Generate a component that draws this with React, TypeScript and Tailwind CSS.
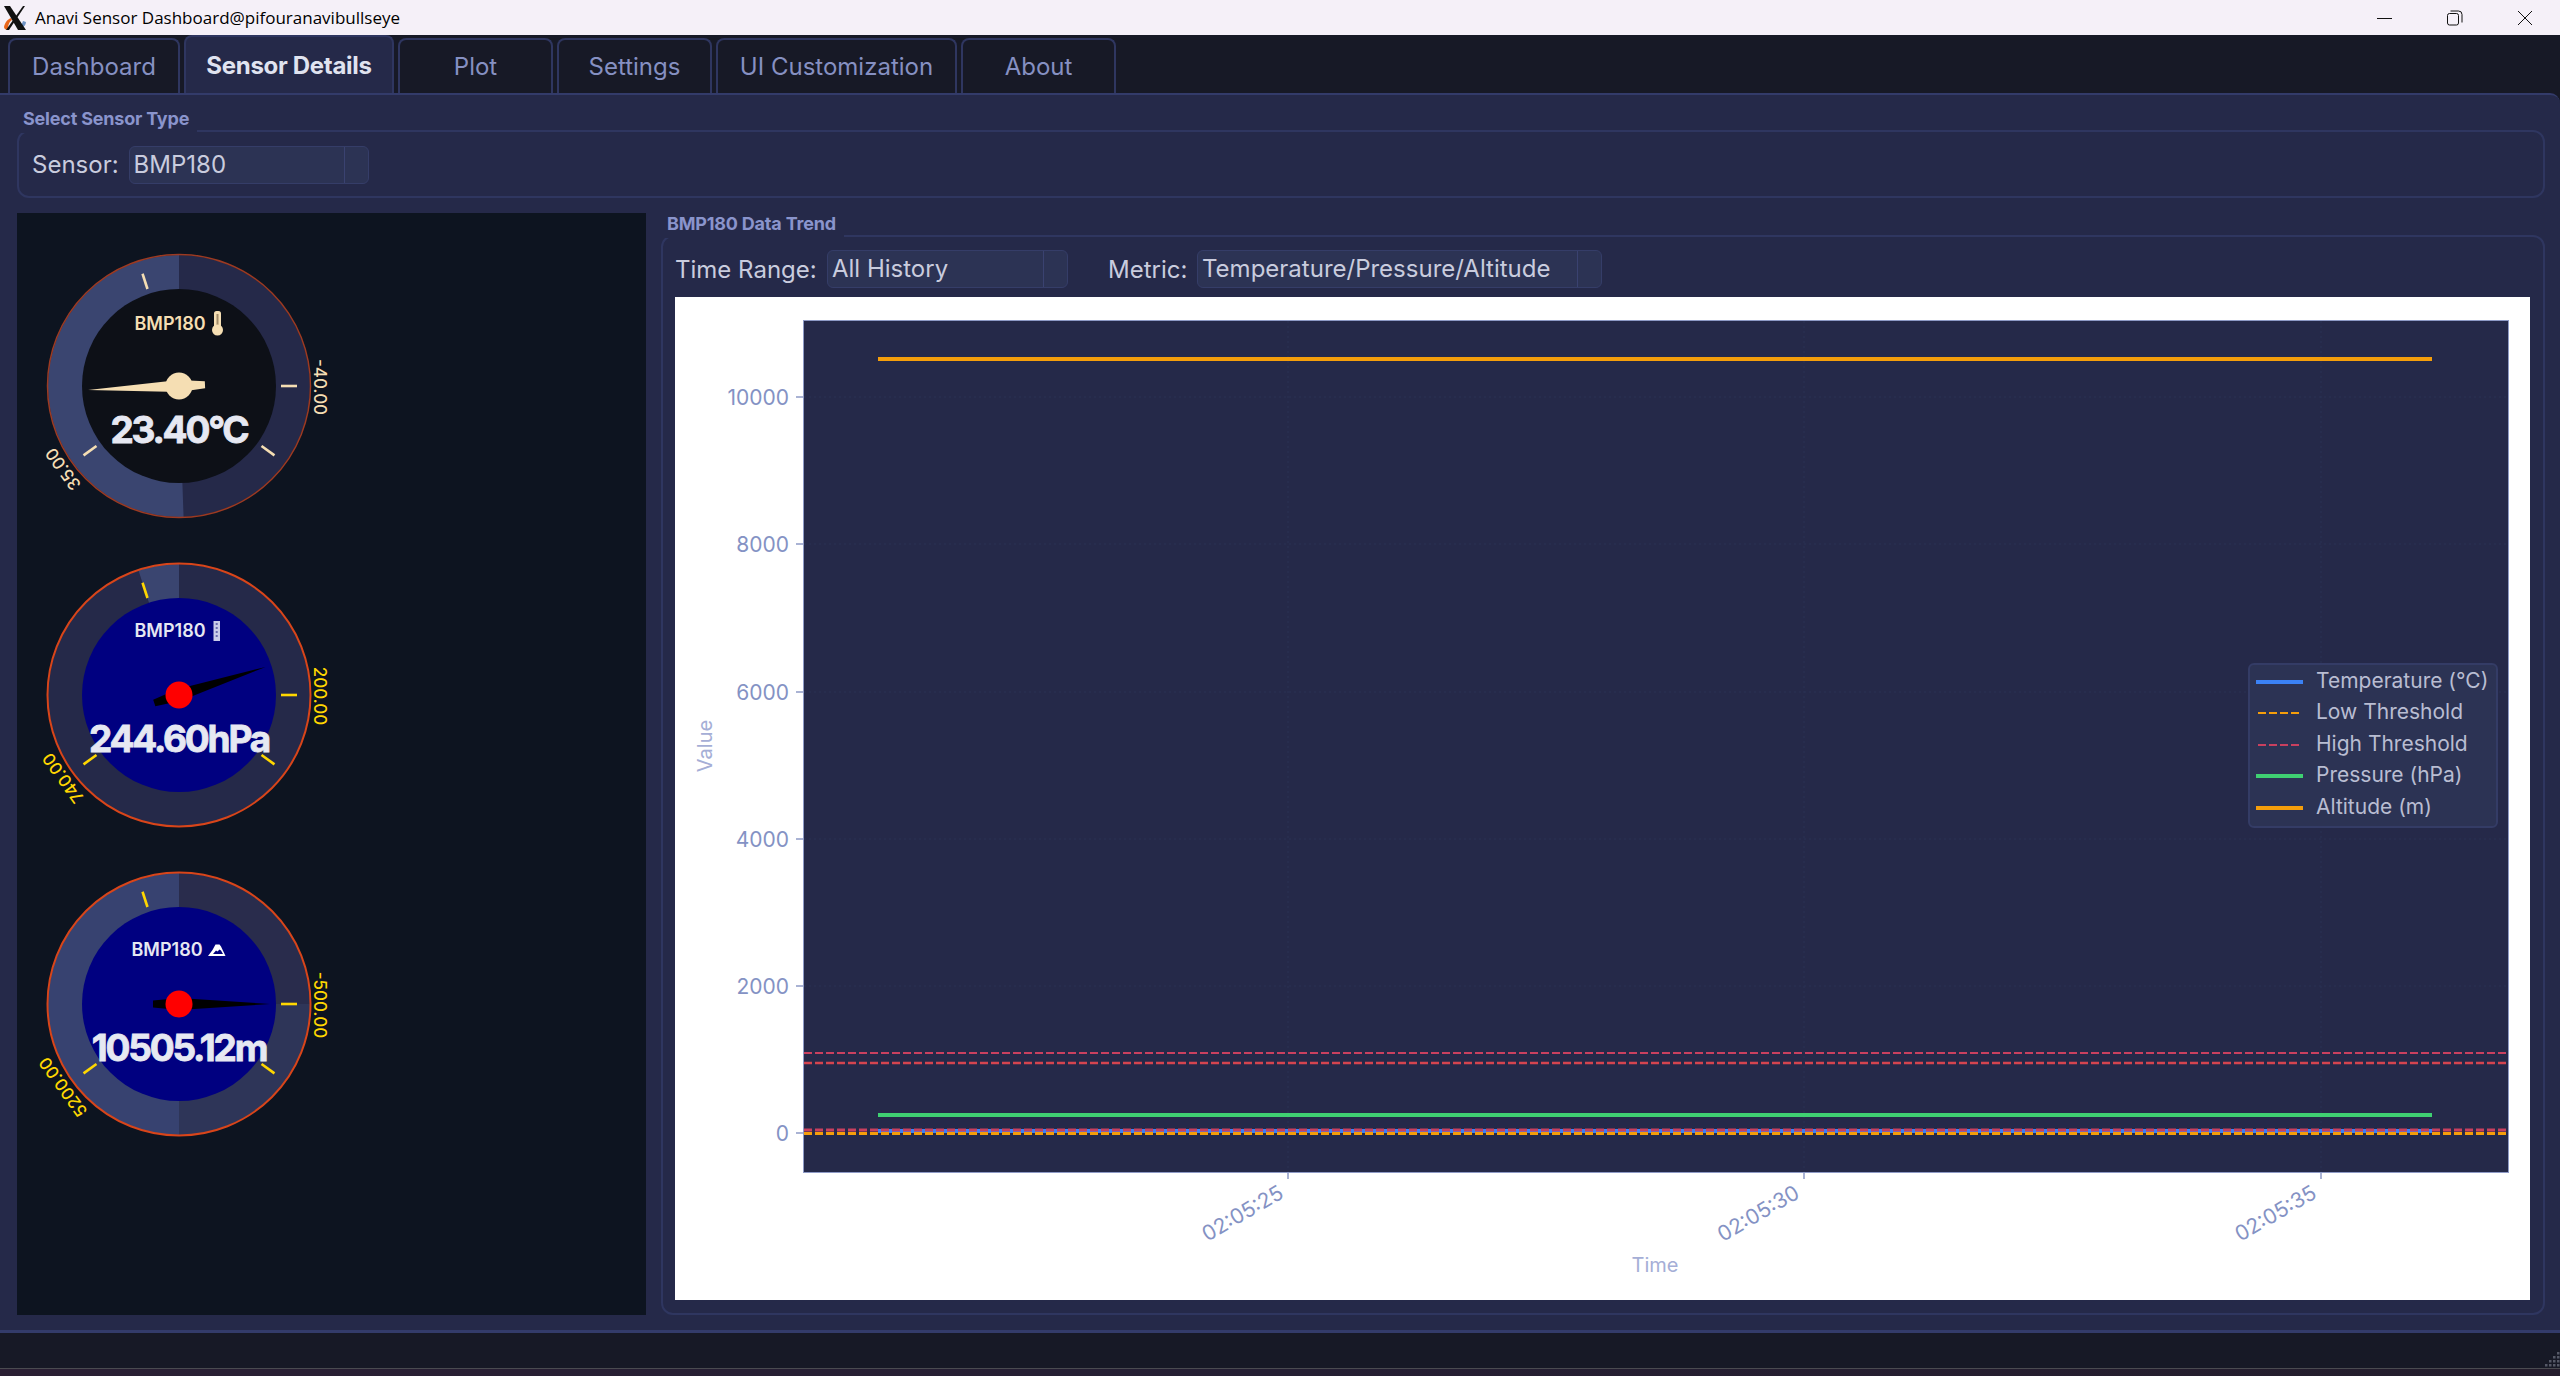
import React from 'react';

const font = { fontFamily: 'Inter, sans-serif' };

const polar = (cx: number, cy: number, r: number, deg: number) => {
  const a = (deg * Math.PI) / 180;
  return [cx + r * Math.cos(a), cy + r * Math.sin(a)];
};

// ring slice between two angles, clockwise, 0deg = 3 o'clock
const ringSlice = (cx: number, cy: number, r1: number, r2: number, from: number, to: number) => {
  const [x1, y1] = polar(cx, cy, r2, from);
  const [x2, y2] = polar(cx, cy, r2, to);
  const [x3, y3] = polar(cx, cy, r1, to);
  const [x4, y4] = polar(cx, cy, r1, from);
  const large = to - from > 180 ? 1 : 0;
  return `M${x1} ${y1}A${r2} ${r2} 0 ${large} 1 ${x2} ${y2}L${x3} ${y3}A${r1} ${r1} 0 ${large} 0 ${x4} ${y4}Z`;
};

type GaugeProps = {
  value: string;
  minLabel: string;
  maxLabel: string;
  needle: number;
  accent: string;
  face: string;
  needleColor: string;
  pivot: string;
  titleColor: string;
  border: string;
  borderWidth: number;
  titleY: number;
  titleX: number;
  bands: { from: number; to: number; color: string }[];
  icon: React.ReactNode;
};

const Gauge: React.FC<GaugeProps> = ({ value, minLabel, maxLabel, needle, accent, face, needleColor, pivot, titleColor, border, borderWidth, titleY, titleX, bands, icon }) => {
  const cx = 159;
  const cy = 155;
  return (
    <svg width="340" height="309" viewBox="0 0 340 309" className="block ml-[3px]" style={font}>
      <circle cx={cx} cy={cy} r={131} fill="#252949" />
      {bands.map(b => (
        <path key={b.from} d={ringSlice(cx, cy, 96, 131, b.from, b.to)} fill={b.color} />
      ))}
      <circle cx={cx} cy={cy} r={131.5} fill="none" stroke={border} strokeWidth={borderWidth} />
      <circle cx={cx} cy={cy} r={97} fill={face} />
      {[36, 144, 252, 360].map(a => {
        const [x1, y1] = polar(cx, cy, 102, a);
        const [x2, y2] = polar(cx, cy, 118, a);
        return <line key={a} x1={x1} y1={y1} x2={x2} y2={y2} stroke={accent} strokeWidth={2.6} />;
      })}
      <text transform={`translate(${cx + 141} ${cy + 1}) rotate(90)`} textAnchor="middle" dominantBaseline="central" fontSize="17" fontWeight="500" fill={accent}>{maxLabel}</text>
      <text transform={`translate(${cx - 116} ${cy + 83}) rotate(234)`} textAnchor="middle" dominantBaseline="central" fontSize="17" fontWeight="500" fill={accent}>{minLabel}</text>
      <text x={cx + titleX} y={cy + titleY} textAnchor="middle" fontSize="18" fontWeight="600" fill={titleColor}>BMP180</text>
      {icon}
      <g transform={`translate(${cx} ${cy}) rotate(${needle})`}>
        <polygon points="91,0 0,-6 -26,-3.5 -26,3.5 0,6" fill={needleColor} />
      </g>
      <circle cx={cx} cy={cy} r={13.5} fill={pivot} />
      <text x={cx} y={cy + 57} textAnchor="middle" fontSize="37" fontWeight="700" letterSpacing="-2.2" stroke="#e6e8f2" strokeWidth="0.8" fill="#e6e8f2">{value}</text>
    </svg>
  );
};

const Combo: React.FC<{ text: string; width: string }> = ({ text, width }) => (
  <div className={`${width} h-[38px] flex items-center bg-[#2c3354] border border-[#353d68] rounded-[6px] text-[24px] text-[#c9ccde]`}>
    <span className="flex-1 pl-[4px] whitespace-nowrap">{text}</span>
    <span className="w-[24px] h-full border-l border-[#3a4270]" />
  </div>
);

const tabs = [
  { label: 'Dashboard', w: 'w-[172px]' },
  { label: 'Sensor Details', w: 'w-[210px]', active: true },
  { label: 'Plot', w: 'w-[155px]' },
  { label: 'Settings', w: 'w-[155px]' },
  { label: 'UI Customization', w: 'w-[241px]' },
  { label: 'About', w: 'w-[155px]' },
];

const yTicks = [
  { label: '10000', y: 397 },
  { label: '8000', y: 544 },
  { label: '6000', y: 692 },
  { label: '4000', y: 839 },
  { label: '2000', y: 986 },
  { label: '0', y: 1133 },
];
const xTicks = [
  { label: '02:05:25', x: 1288 },
  { label: '02:05:30', x: 1804 },
  { label: '02:05:35', x: 2321 },
];

const legend = [
  { label: 'Temperature (°C)', color: '#3b82f6', dashed: false },
  { label: 'Low Threshold', color: '#f59e0b', dashed: true },
  { label: 'High Threshold', color: '#c9405f', dashed: true },
  { label: 'Pressure (hPa)', color: '#3fd072', dashed: false },
  { label: 'Altitude (m)', color: '#f59e0b', dashed: false },
];

const Chart: React.FC = () => (
  <svg width="1855" height="1003" viewBox="675 297 1855 1003" className="block" style={font}>
    <rect x="803.5" y="320.5" width="1705" height="852" fill="#252949" stroke="#8e9ac6" strokeWidth="1" />
    {yTicks.map(t => (
      <g key={t.label}>
        <line x1="804" x2="2508" y1={t.y} y2={t.y} stroke="#2a3355" strokeWidth="1" strokeDasharray="2 3" />
        <line x1="796" x2="803" y1={t.y} y2={t.y} stroke="#8e9ac6" strokeWidth="1.5" />
        <text x="789" y={t.y + 8} textAnchor="end" fontSize="21" fontWeight="400" fill="#8492c4">{t.label}</text>
      </g>
    ))}
    {xTicks.map(t => (
      <g key={t.label}>
        <line x1={t.x} x2={t.x} y1="321" y2="1172" stroke="#2a3355" strokeWidth="1" strokeDasharray="2 3" />
        <line x1={t.x} x2={t.x} y1="1172" y2="1179" stroke="#8e9ac6" strokeWidth="1.5" />
        <text transform={`translate(${t.x - 3} 1197) rotate(-30)`} textAnchor="end" fontSize="21" fontWeight="400" fill="#8492c4">{t.label}</text>
      </g>
    ))}
    <text transform="translate(712 746) rotate(-90)" textAnchor="middle" fontSize="20" fontWeight="400" fill="#a5aed6">Value</text>
    <text x="1655" y="1272" textAnchor="middle" fontSize="20" fontWeight="400" fill="#a5aed6">Time</text>

    <line x1="804" x2="2508" y1="1053" y2="1053" stroke="#c9405f" strokeWidth="2" strokeDasharray="8 3" />
    <line x1="804" x2="2508" y1="1063" y2="1063" stroke="#d4444f" strokeWidth="2.5" strokeDasharray="8 3" />
    <line x1="878" x2="2432" y1="359" y2="359" stroke="#f59e0b" strokeWidth="4" />
    <line x1="878" x2="2432" y1="1115" y2="1115" stroke="#3fd072" strokeWidth="4" />
    <line x1="878" x2="2432" y1="1131" y2="1131" stroke="#3b82f6" strokeWidth="4" />
    <line x1="804" x2="2508" y1="1130" y2="1130" stroke="#c9405f" strokeWidth="3" strokeDasharray="8 3" />
    <line x1="804" x2="2508" y1="1133.5" y2="1133.5" stroke="#f59e0b" strokeWidth="3" strokeDasharray="8 3" />
  </svg>
);

const WindowLogo: React.FC = () => (
  <svg width="28" height="28" viewBox="0 0 28 28" className="ml-[1px]">
    <path d="M3 23c1-5 4-8 7-9l1 2c-3 2-4 5-4 10-2 0-4-1-4-3z" fill="#e8651a" />
    <path d="M20 24c3-1 5-3 5-6l-3-1c-1 3-2 4-4 5z" fill="#6f93c4" />
    <polygon points="3,2 9,2 25,26 17,26" fill="#111" />
    <polygon points="22,2 24,2 8,26 5,26" fill="#111" />
  </svg>
);

const gridDots = [
  [12, 0], [8, 4], [12, 4], [4, 8], [8, 8], [12, 8], [0, 12], [4, 12], [8, 12], [12, 12],
];

const App: React.FC = () => {
  return (
    <div className="w-[2560px] h-[1376px] flex flex-col overflow-hidden bg-[#171926]" style={font}>
      {/* Title bar */}
      <div className="h-[35px] shrink-0 flex items-center bg-[#f5f0f8] text-black">
        <WindowLogo />
        <span className="ml-[6px] text-[17px] whitespace-nowrap" style={{ fontFamily: '"Open Sans", sans-serif' }}>Anavi Sensor Dashboard@pifouranavibullseye</span>
        <div className="ml-auto flex">
          <div className="w-[70px] h-[35px] flex items-center justify-center">
            <svg width="16" height="16" viewBox="0 0 16 16"><line x1="0" x2="15" y1="8.5" y2="8.5" stroke="#111" strokeWidth="1" /></svg>
          </div>
          <div className="w-[70px] h-[35px] flex items-center justify-center">
            <svg width="16" height="16" viewBox="0 0 16 16" fill="none" stroke="#111" strokeWidth="1">
              <rect x="0.5" y="3.5" width="11" height="11.5" rx="2" />
              <path d="M3.5 1h8a3.5 3.5 0 0 1 3.5 3.5v8" />
            </svg>
          </div>
          <div className="w-[70px] h-[35px] flex items-center justify-center">
            <svg width="16" height="16" viewBox="0 0 16 16" stroke="#111" strokeWidth="1"><line x1="1" y1="1" x2="15" y2="15" /><line x1="15" y1="1" x2="1" y2="15" /></svg>
          </div>
        </div>
      </div>

      {/* Tabs */}
      <div className="h-[58px] shrink-0 flex items-end gap-[4px] pl-[8px]">
        {tabs.map(t =>
          t.active ? (
            <div key={t.label} className={`${t.w} h-[58px] pt-[2px] flex items-center justify-center bg-[#252949] border-2 border-b-0 border-[#2f3660] rounded-t-[8px] text-[24px] font-bold text-[#e0e3f0] tracking-[-0.3px]`}>
              {t.label}
            </div>
          ) : (
            <div key={t.label} className={`${t.w} h-[55px] flex items-center justify-center bg-[#171926] border-2 border-b-0 border-[#2f3660] rounded-t-[8px] text-[24px] text-[#8690c2]`}>
              {t.label}
            </div>
          )
        )}
      </div>

      {/* Tab panel */}
      <div className="h-[1240px] shrink-0 flex flex-col bg-[#252949] border-t-2 border-b-[3px] border-[#333b6a] rounded-tr-[10px] pt-[35px] pl-[17px] pr-[15px] pb-[15px]">
        <div className="relative h-[68px] shrink-0 flex items-center gap-[10px] pl-[13px] pt-[2px] border-2 border-[#2f3660] rounded-[12px]">
          <span className="absolute left-[-2px] top-[-25px] pl-[6px] pr-[8px] h-[26px] leading-[24px] bg-[#252949] text-[18px] font-bold text-[#8a94cc] tracking-[-0.2px]">Select Sensor Type</span>
          <span className="text-[24px] text-[#c9ccde]">Sensor:</span>
          <Combo text="BMP180" width="w-[240px]" />
        </div>

        <div className="flex-1 flex gap-[15px] mt-[15px] min-h-0">
          {/* Gauges */}
          <div className="w-[629px] shrink-0 flex flex-col bg-[#0d1420] pt-[18px]">
            <Gauge
              value="23.40°C"
              minLabel="35.00"
              maxLabel="-40.00"
              needle={177.5}
              accent="#f5deb3"
              face="#0d1017"
              needleColor="#f5deb3"
              pivot="#f5deb3"
              titleColor="#f5deb3"
              border="#9c3a22"
              borderWidth={1.5}
              titleX={-9}
              titleY={-56}
              bands={[{ from: 88, to: 270, color: '#3a4570' }]}
              icon={
                <g>
                  <rect x="194" y="80" width="7" height="20" rx="2.5" fill="#f5deb3" />
                  <rect x="196.5" y="83" width="2" height="14" fill="#a08a68" />
                  <circle cx="197.5" cy="99" r="5.5" fill="#f5deb3" />
                </g>
              }
            />
            <Gauge
              value="244.60hPa"
              minLabel="740.00"
              maxLabel="200.00"
              needle={-18}
              accent="#ffd700"
              face="#000080"
              needleColor="#000"
              pivot="#f00"
              titleColor="#e6e8f2"
              border="#d8451a"
              borderWidth={2}
              titleX={-9}
              titleY={-58}
              bands={[{ from: 252, to: 270, color: '#3a4570' }]}
              icon={
                <g>
                  <rect x="193.5" y="81" width="6.5" height="20" fill="#c9cbe8" />
                  <line x1="196.7" x2="196.7" y1="83" y2="99" stroke="#6a6cb0" strokeWidth="2" strokeDasharray="2 2" />
                </g>
              }
            />
            <Gauge
              value="10505.12m"
              minLabel="5200.00"
              maxLabel="-500.00"
              needle={0}
              accent="#ffd700"
              face="#000080"
              needleColor="#000"
              pivot="#f00"
              titleColor="#e6e8f2"
              border="#d8451a"
              borderWidth={2}
              titleX={-12}
              titleY={-48}
              bands={[
                { from: 270, to: 360, color: '#292c4c' },
                { from: 0, to: 90, color: '#2e3558' },
                { from: 90, to: 270, color: '#374270' },
              ]}
              icon={<path d="M188 107l4.5-6 3-5.5h4l1.5 2 4.5 9.5z M193 105l3-3.5 1.5 1 2-2 1.5 1 2 3.5z" fill="#fff" fillRule="evenodd" />}
            />
          </div>

          {/* Trend */}
          <div className="relative flex-1 mt-[22px] border-2 border-[#2f3660] rounded-[12px] pt-[13px] pl-[12px] pr-[13px] flex flex-col min-w-0">
            <span className="absolute left-[-2px] top-[-25px] pl-[6px] pr-[8px] h-[26px] leading-[24px] bg-[#252949] text-[18px] font-bold text-[#8a94cc] tracking-[-0.2px]">BMP180 Data Trend</span>
            <div className="h-[38px] shrink-0 flex items-center">
              <span className="pt-[2px] w-[152px] text-[24px] text-[#c9ccde]">Time Range:</span>
              <Combo text="All History" width="w-[241px]" />
              <span className="ml-[40px] pt-[2px] w-[89px] text-[24px] text-[#c9ccde]">Metric:</span>
              <Combo text="Temperature/Pressure/Altitude" width="w-[405px]" />
            </div>
            <div className="relative mt-[9px] bg-white">
              <Chart />
              <div className="absolute left-[1573px] top-[366px] w-[250px] h-[165px] flex flex-col pt-[1px] bg-[#2c3354] border-2 border-[#343c66] rounded-[6px] text-[21px] text-[#b9bdd2]">
                {legend.map(l => (
                  <div key={l.label} className="h-[31.5px] flex items-center">
                    <svg width="60" height="6" viewBox="0 0 60 6" className="shrink-0 ml-[6px]">
                      <line x1={l.dashed ? 2 : 0} x2={l.dashed ? 44 : 47} y1="3" y2="3" stroke={l.color} strokeWidth={l.dashed ? 2 : 4} strokeDasharray={l.dashed ? '8 3' : undefined} />
                    </svg>
                    <span className="whitespace-nowrap leading-none -mt-[3px]">{l.label}</span>
                  </div>
                ))}
              </div>
            </div>
          </div>
        </div>
      </div>

      {/* Bottom bar */}
      <div className="relative h-[35px] shrink-0">
        <svg width="15" height="15" viewBox="0 0 15 15" className="absolute right-0 bottom-[1px]">
          {gridDots.map(([x, y]) => (
            <rect key={`${x}-${y}`} x={x} y={y} width="2.5" height="2.5" fill="#555866" />
          ))}
        </svg>
      </div>
      <div className="flex-1 border-t border-[#4a4a50] bg-gradient-to-r from-[#2a1f33] via-[#251f33] to-[#241d2c]" />
    </div>
  );
};

export default App;
